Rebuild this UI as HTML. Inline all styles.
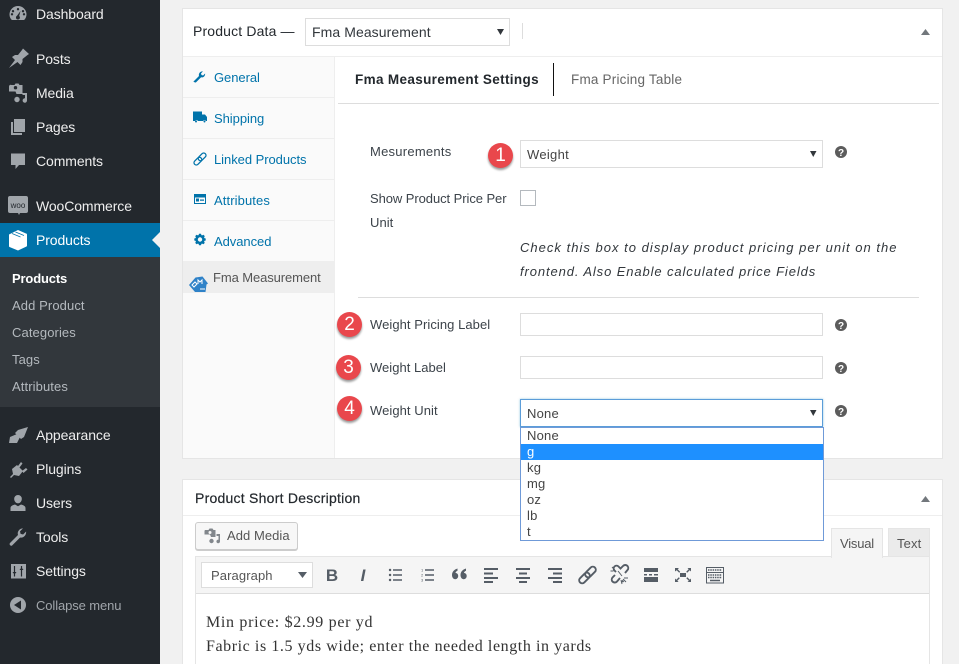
<!DOCTYPE html>
<html><head><meta charset="utf-8">
<style>
html,body{margin:0;padding:0;width:959px;height:664px;overflow:hidden;background:#f1f1f1}
body{position:relative;font-family:"Liberation Sans",sans-serif;font-size:13px;color:#444}
.b{position:absolute;box-sizing:border-box}
.t{position:absolute;white-space:nowrap;line-height:18px;height:18px}
.m{color:#eee;font-size:14px;left:36px;letter-spacing:-.1px}
.s{color:#b4b9be;font-size:13px;left:12px;letter-spacing:.1px}
.tab{color:#0073aa;font-size:13px;left:214px;letter-spacing:-.05px}
.l{color:#3c434a;font-size:13px;left:370px;letter-spacing:.06px}
.o{color:#444;font-size:13px;left:527px;line-height:16px;height:16px;letter-spacing:.2px}
.num{position:absolute;width:25px;height:25px;border-radius:50%;background:#e9474c;box-shadow:0 2px 2px rgba(0,0,0,.4);color:#fff;font-size:19px;line-height:25px;text-align:center}
.f{background:#fff;border:1px solid #ddd}
svg{position:absolute;left:0;top:0}
</style></head><body>
<div class="b" style="left:0;top:0;width:160px;height:664px;background:#23282d"></div>
<div class="b" style="left:0;top:223px;width:160px;height:34px;background:#0073aa"></div>
<div class="b" style="left:0;top:257px;width:160px;height:150px;background:#32373c"></div>

<div class="t m" style="top:5px">Dashboard</div>
<div class="t m" style="top:50px">Posts</div>
<div class="t m" style="top:84px">Media</div>
<div class="t m" style="top:118px">Pages</div>
<div class="t m" style="top:152px">Comments</div>
<div class="t m" style="top:197px">WooCommerce</div>
<div class="t m" style="top:231px;color:#fff">Products</div>
<div class="t s" style="top:270px;color:#fff;font-weight:bold;letter-spacing:-.15px">Products</div>
<div class="t s" style="top:297px">Add Product</div>
<div class="t s" style="top:324px">Categories</div>
<div class="t s" style="top:351px">Tags</div>
<div class="t s" style="top:378px">Attributes</div>
<div class="t m" style="top:426px">Appearance</div>
<div class="t m" style="top:460px">Plugins</div>
<div class="t m" style="top:494px">Users</div>
<div class="t m" style="top:528px">Tools</div>
<div class="t m" style="top:562px">Settings</div>
<div class="t m" style="top:597px;color:#a0a5aa;font-size:13px;letter-spacing:-.1px">Collapse menu</div>

<!-- panel 1 -->
<div class="b" style="left:182px;top:8px;width:761px;height:451px;background:#fff;border:1px solid #e5e5e5"></div>
<div class="b" style="left:183px;top:56px;width:759px;height:1px;background:#eee"></div>
<div class="b" style="left:183px;top:57px;width:152px;height:401px;background:#fafafa;border-right:1px solid #eee"></div>
<div class="b" style="left:183px;top:97px;width:151px;height:1px;background:#eee"></div>
<div class="b" style="left:183px;top:138px;width:151px;height:1px;background:#eee"></div>
<div class="b" style="left:183px;top:179px;width:151px;height:1px;background:#eee"></div>
<div class="b" style="left:183px;top:220px;width:151px;height:1px;background:#eee"></div>
<div class="b" style="left:183px;top:261px;width:151px;height:32px;background:#eee"></div>

<div class="t" style="left:193px;top:22px;font-size:14px;color:#23282d;letter-spacing:.15px">Product Data —</div>
<div class="b f" style="left:305px;top:18px;width:205px;height:28px"></div>
<div class="t" style="left:312px;top:23px;font-size:14px;color:#32373c;letter-spacing:.08px">Fma Measurement</div>
<div class="b" style="left:522px;top:23px;width:1px;height:16px;background:#ddd"></div>

<div class="t tab" style="top:69px">General</div>
<div class="t tab" style="top:110px">Shipping</div>
<div class="t tab" style="top:151px">Linked Products</div>
<div class="t tab" style="top:192px;letter-spacing:.1px">Attributes</div>
<div class="t tab" style="top:233px">Advanced</div>
<div class="t" style="left:213px;top:269px;color:#555;letter-spacing:-.1px">Fma Measurement</div>

<div class="t" style="left:355px;top:71px;font-weight:bold;color:#23282d;font-size:13.5px;letter-spacing:.35px">Fma Measurement Settings</div>
<div class="b" style="left:553px;top:63px;width:1px;height:33px;background:#111"></div>
<div class="t" style="left:571px;top:71px;color:#666;font-size:13.5px;letter-spacing:.2px">Fma Pricing Table</div>
<div class="b" style="left:338px;top:103px;width:601px;height:1px;background:#ddd"></div>

<div class="t l" style="top:143px;letter-spacing:.25px">Mesurements</div>
<div class="b f" style="left:520px;top:140px;width:303px;height:28px"></div>
<div class="t" style="left:527px;top:146px;letter-spacing:.3px">Weight</div>
<div class="t l" style="top:190px;letter-spacing:-.07px">Show Product Price Per</div>
<div class="t l" style="top:214px">Unit</div>
<div class="b" style="left:520px;top:190px;width:16px;height:16px;background:#fff;border:1px solid #b4b9be"></div>
<div class="t" style="left:520px;top:239px;font-style:italic;color:#32373c;letter-spacing:1.02px">Check this box to display product pricing per unit on the</div>
<div class="t" style="left:520px;top:263px;font-style:italic;color:#32373c;letter-spacing:.89px">frontend. Also Enable calculated price Fields</div>
<div class="b" style="left:358px;top:297px;width:561px;height:1px;background:#ddd"></div>

<div class="t l" style="top:316px">Weight Pricing Label</div>
<div class="b f" style="left:520px;top:313px;width:303px;height:23px"></div>
<div class="t l" style="top:359px;letter-spacing:.02px">Weight Label</div>
<div class="b f" style="left:520px;top:356px;width:303px;height:23px"></div>
<div class="t l" style="top:402px">Weight Unit</div>
<div class="b" style="left:520px;top:399px;width:303px;height:28px;background:#fff;border:1px solid #5b9dd9;box-shadow:0 0 2px rgba(30,140,190,.5)"></div>
<div class="t" style="left:527px;top:405px;letter-spacing:.2px">None</div>

<!-- panel 2 -->
<div class="b" style="left:182px;top:479px;width:761px;height:190px;background:#fff;border:1px solid #e5e5e5"></div>
<div class="b" style="left:183px;top:515px;width:759px;height:1px;background:#eee"></div>
<div class="t" style="left:195px;top:489px;font-size:14px;color:#23282d;letter-spacing:.24px;-webkit-text-stroke:.2px #23282d">Product Short Description</div>
<div class="b" style="left:195px;top:522px;width:103px;height:28px;background:#f7f7f7;border:1px solid #ccc;border-radius:3px;box-shadow:0 1px 0 #ccc"></div>
<div class="t" style="left:227px;top:527px;color:#555;letter-spacing:.05px">Add Media</div>
<div class="b" style="left:195px;top:556px;width:735px;height:120px;background:#fff;border:1px solid #e5e5e5"></div>
<div class="b" style="left:196px;top:557px;width:733px;height:37px;background:#f5f5f5;border-bottom:1px solid #ddd"></div>
<div class="b" style="left:831px;top:528px;width:52px;height:30px;background:#f5f5f5;border:1px solid #e5e5e5;border-bottom:0"></div>
<div class="t" style="left:840px;top:535px;color:#555;font-size:13px;letter-spacing:-.2px">Visual</div>
<div class="b" style="left:888px;top:528px;width:42px;height:28px;background:#ebebeb;border:1px solid #e5e5e5;border-bottom:0"></div>
<div class="t" style="left:897px;top:535px;color:#555;font-size:13px;letter-spacing:.15px">Text</div>
<div class="b" style="left:201px;top:562px;width:112px;height:26px;background:#fff;border:1px solid #ddd"></div>
<div class="t" style="left:211px;top:567px;color:#555;font-size:13px;letter-spacing:.1px">Paragraph</div>
<div class="t" style="left:206px;top:613px;font-family:'Liberation Serif',serif;font-size:16px;line-height:20px;height:20px;color:#333;letter-spacing:.68px">Min price: $2.99 per yd</div>
<div class="t" style="left:206px;top:637px;font-family:'Liberation Serif',serif;font-size:16px;line-height:20px;height:20px;color:#333;letter-spacing:.58px">Fabric is 1.5 yds wide; enter the needed length in yards</div>

<!-- dropdown -->
<div class="b" style="left:520px;top:427px;width:304px;height:114px;background:#fff;border:1px solid #6f9ad8"></div>
<div class="b" style="left:521px;top:444px;width:302px;height:16px;background:#1e90ff"></div>
<div class="t o" style="top:428px">None</div>
<div class="t o" style="top:444px;color:#fff">g</div>
<div class="t o" style="top:460px">kg</div>
<div class="t o" style="top:476px">mg</div>
<div class="t o" style="top:492px">oz</div>
<div class="t o" style="top:508px">lb</div>
<div class="t o" style="top:524px">t</div>

<div class="num" style="left:488px;top:143px">1</div>
<div class="num" style="left:337px;top:312px">2</div>
<div class="num" style="left:336px;top:355px">3</div>
<div class="num" style="left:337px;top:396px">4</div>

<svg width="959" height="664" viewBox="0 0 959 664">
<!-- sidebar icons -->
<g fill="#a0a5aa">
<path fill-rule="evenodd" d="M18 6a8.500 8.500 0 0 0-8.500 8.500c0 2.300.9 4.300 2.400 5.500h12.200a8 8 0 0 0 2.400-5.500A8.500 8.500 0 0 0 18 6zM18 8a1.200 1.200 0 1 1 0 2.400 1.200 1.200 0 0 1 0-2.400zM13 10a1.200 1.200 0 1 1 0 2.400 1.200 1.200 0 0 1 0-2.400zM12 15.500a1.200 1.200 0 1 1 0-2.400 1.200 1.200 0 0 1 0 2.400zM24 15.500a1.200 1.200 0 1 1 0-2.400 1.200 1.200 0 0 1 0 2.400zM23 10a1.200 1.200 0 1 1 0 2.400 1.200 1.200 0 0 1 0-2.400zM20.500 11l-1.300 5a2 2 0 1 1-2.200-.2z"/>
<path d="M9 68l6-8-3-3 3-2 3 0 4-5 1-1.500 6 5.500-1.500 1-5 4v3l-2 3-3-3z"/>
<path fill-rule="evenodd" d="M11.500 85h3l1-1.500h3l1 1.500h3v9h-6l-1-2.500H9v-5a1.700 1.700 0 0 1 2.500-1.500zM15.500 86a1.700 1.700 0 1 0 0 3.400 1.700 1.700 0 0 0 0-3.400z"/>
<path d="M27 93v7.500a2.200 2.200 0 1 1-2-2.200V95h-2.500v-2z"/>
<circle cx="17" cy="99.500" r="2.700"/>
<path d="M14 119h11v13H14zM11 122h2v11h9v2H11z"/>
<path d="M11 153.500h14v11.500h-6l-3.500 4v-4H11z"/>
<path d="M10 196h16a2 2 0 0 1 2 2v13a2 2 0 0 1-2 2h-6l-1 2-1-2h-8a2 2 0 0 1-2-2v-13a2 2 0 0 1 2-2z"/>
<path d="M9 443l1-6 7-3 3 3-3 6zM15 433l3-3 10-3-4 10-3 2z"/>
<path d="M10 477l3-3-1-5 5-4 6 6-4 5-5-1-3 3zM18 466l3-4 1.500 1.500-3 4zM22 471l4-3 1.500 1.500-4 3.500z"/>
<path d="M18 495a3.800 3.800 0 0 1 3.800 4c0 2.400-1.800 4.300-3.800 4.300s-3.800-1.900-3.800-4.300A3.800 3.800 0 0 1 18 495zM10.500 511v-3c0-2 2.500-3 4.500-3.500l3 1.700 3-1.700c2 .5 4.500 1.500 4.500 3.500v3z"/>
<path d="M10 543l8-8c-1-3 1-6 4-6.500l1-.1-3 3 .6 2.500 2.500.6 3-3c.4 3.500-2.500 6.700-6 6l-8 8c-1 1-3.500-1-2.100-2.500z"/>
<rect x="11" y="564" width="15" height="14.500"/>
<circle cx="18" cy="605" r="8"/>
</g>
<path d="M21 600.500v9l-7-4.500z" fill="#23282d"/>
<path d="M14.500 566v10.500M21.500 566v10.500" stroke="#23282d" stroke-width="1.200"/>
<path d="M12.500 572h4l-2 2.500zM19.500 570h4l-2-2.500z" fill="#23282d"/>
<text x="18" y="208" fill="#23282d" font-size="8" text-anchor="middle" font-family="Liberation Sans">woo</text>
<path d="M18 230l8 3.500a1 1 0 0 1 1 1v11a1 1 0 0 1-.5 1L18 250.500l-8.500-3.500a1 1 0 0 1-.5-1v-11a1 1 0 0 1 1-1z" fill="#fff"/>
<path d="M12 233.500l8.500 3.500M15.500 232l8.500 3.500" stroke="#0073aa" stroke-width=".7" fill="none"/>
<path d="M152 240l8-8v16z" fill="#f1f1f1"/>

<!-- tab icons -->
<g fill="#0073aa">
<path d="M194 81l5-5c-.6-2 .6-4 2.500-4.500l1.500-.1-2 2 .5 1.600 1.600.5 2-2c.3 2.400-1.700 4.400-4 3.800l-5 5c-.8.800-3-.9-2.600-1.300z"/>
<path d="M193 111.500h9v3h3l2 2.500v4h-1a1.700 1.700 0 0 0-3 0h-5a1.700 1.700 0 0 0-3 0h-2z"/>
<circle cx="196" cy="121.500" r="1"/><circle cx="204.500" cy="121.500" r="1"/>
<path fill-rule="evenodd" d="M194 194h12v10h-12zM195 197.500v5.500h10v-5.500zM196 198.500h3v3h-3zM200 199.500h4v1.200h-4z"/>
<path fill-rule="evenodd" d="M199 233.800h2l.4 1.300.8.3 1.200-.7 1.400 1.400-.7 1.200.3.800 1.300.4v2l-1.300.4-.3.800.7 1.200-1.400 1.400-1.200-.7-.8.3-.4 1.300h-2l-.4-1.300-.8-.3-1.200.7-1.400-1.400.7-1.200-.3-.8-1.300-.4v-2l1.300-.4.300-.8-.7-1.200 1.400-1.400 1.200.7.800-.3zM200 237.300a2.200 2.200 0 1 0 0 4.400 2.200 2.200 0 0 0 0-4.400z"/>
</g>
<g fill="none" stroke="#0073aa" stroke-width="1.300" transform="rotate(-45 200 159)">
<rect x="192.500" y="156.700" width="9" height="4.600" rx="2.300"/>
<rect x="198.500" y="156.700" width="9" height="4.600" rx="2.300"/>
</g>
<!-- FMA logo -->
<path d="M189 285l6.500-7.500 7-1 5.500 7-1.500 1-1 7.500h-10.500z" fill="#2f82c8"/>
<path d="M192 285l3-3 2 2-3 3zM198 284v-4l2 2 2-2v4M200 289h5" stroke="#fff" stroke-width="1" fill="none"/>

<!-- select arrows -->
<g fill="#32373c">
<path d="M497 29h7l-3.500 6z"/>
<path d="M810 151h6.500l-3.250 6z"/>
<path d="M810 410h6.500l-3.250 6z"/>
</g>
<path d="M921 35l4.500-6 4.500 6z" fill="#72777c"/>
<path d="M921 502l4.500-6 4.500 6z" fill="#72777c"/>
<path d="M298 572h9l-4.500 6z" fill="#555d66"/>

<!-- help icons -->
<g>
<circle cx="841" cy="152" r="6" fill="#5c5c5c"/>
<circle cx="841" cy="325" r="6" fill="#5c5c5c"/>
<circle cx="841" cy="368" r="6" fill="#5c5c5c"/>
<circle cx="841" cy="411" r="6" fill="#5c5c5c"/>
<g fill="#fff" font-size="10" font-weight="bold" text-anchor="middle" font-family="Liberation Sans">
<text x="841" y="156">?</text><text x="841" y="329">?</text><text x="841" y="372">?</text><text x="841" y="415">?</text>
</g>
</g>

<!-- add media icon -->
<path fill="#82878c" fill-rule="evenodd" d="M205.500 530h3l1-1.500h3l1 1.500h2v7h-4.500l-1-2.500h-5.500v-3.500a1.500 1.500 0 0 1 .500-1zM210 531a1.500 1.500 0 1 0 0 3 1.500 1.500 0 0 0 0-3z"/>
<path fill="#82878c" d="M220 534v7.500a1.800 1.800 0 1 1-1.500-1.800V536h-2v-2z"/>
<circle cx="211.500" cy="541" r="2.200" fill="#82878c"/>

<!-- toolbar -->
<text x="332" y="581" fill="#555d66" font-size="17" font-weight="bold" text-anchor="middle" font-family="Liberation Sans">B</text>
<text x="363" y="581" fill="#555d66" font-size="17" font-weight="bold" font-style="italic" text-anchor="middle" font-family="Liberation Sans">I</text>
<g stroke="#555d66" stroke-width="1.500" fill="none">
<path d="M393 570h9M393 575h9M393 580h9"/>
<path d="M425 570h9M425 575h9M425 580h9"/>
<path d="M484 569h14M484 573.500h9M484 578h14M484 582h9" stroke-width="2"/>
<path d="M516 569h14M519 573.500h8M516 578h14M519 582h8" stroke-width="2"/>
<path d="M548 569h14M553 573.500h9M548 578h14M553 582h9" stroke-width="2"/>
<g transform="rotate(-45 587.500 575)" stroke-width="1.900">
<rect x="577" y="572" width="12.500" height="6" rx="3"/>
<rect x="585.500" y="572" width="12.500" height="6" rx="3"/>
</g>
<path d="M616 572l-1.500-1.500a2.800 2.800 0 0 1 4-4l2 2 2.500-2.500a3 3 0 0 1 4.500 4L625 573M620 578l-3 3.500a3 3 0 0 1-4.500-4l2.500-2.500M622 580.500l1.500 1.500" stroke-width="1.900"/>
<path d="M612 567l2.500 2.500M610.500 571h3M622 584l-1-4M626 582l-3-3M628 578h-4M618 571l4 5" stroke-width="1"/>
<path d="M390 570h.1M390 575h.1M390 580h.1" stroke-width="2.400" stroke-linecap="round"/>
<rect x="706.500" y="567.500" width="17" height="15.500" stroke-width="1"/>
<path d="M708 570h14M708 575h14M708 577.500h14" stroke-width="1.500" stroke-dasharray="1.500 .8"/>
<path d="M707 572.500h16" stroke-width="1"/>
<path d="M710 580.500h10" stroke-width="1.500"/>
</g>
<g fill="#555d66">
<rect x="644" y="568" width="14" height="4"/><rect x="644" y="574" width="3" height="1.500"/><rect x="649" y="574" width="3" height="1.500"/><rect x="654" y="574" width="4" height="1.500"/><rect x="644" y="577" width="14" height="5"/>
<rect x="680" y="573" width="6" height="4"/>
<path d="M675 568h4l-1.300 1.300 2.500 2.500-1 1-2.500-2.500L675 571.500zM691 568v3.500l-1.300-1.300-2.500 2.500-1-1 2.500-2.500L687.500 568zM675 582v-3.500l1.300 1.300 2.500-2.500 1 1-2.500 2.500 1.300 1.200zM691 582h-3.500l1.300-1.200-2.500-2.500 1-1 2.500 2.500 1.200-1.300z"/>
</g>
<text x="421" y="571.500" fill="#555d66" font-size="4" font-family="Liberation Sans">1</text>
<text x="421" y="576.500" fill="#555d66" font-size="4" font-family="Liberation Sans">2</text>
<text x="421" y="581.500" fill="#555d66" font-size="4" font-family="Liberation Sans">3</text>
<path d="M452 575c0-3 2-5.500 5.500-6.500v2.200c-1 .5-2 1-2 2.300 1.500 0 2.700 1.100 2.700 3s-1.400 3.200-3 3.200-3.200-1.500-3.200-4.200zM460.500 575c0-3 2-5.500 5.500-6.500v2.200c-1 .5-2 1-2 2.300 1.500 0 2.700 1.100 2.700 3s-1.400 3.200-3 3.200-3.200-1.500-3.200-4.200z" fill="#555d66"/>
</svg>
</body></html>
